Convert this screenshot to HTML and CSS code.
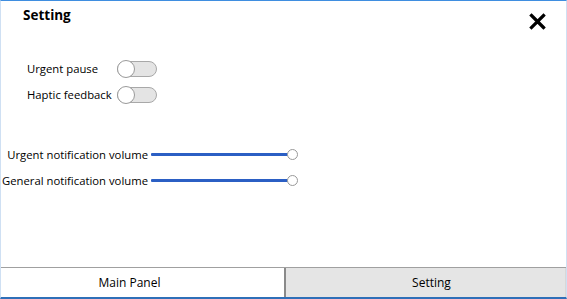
FILE: index.html
```html
<!DOCTYPE html>
<html>
<head>
<meta charset="utf-8">
<link rel="stylesheet" href="styles.css">
</head>
<body>
<div class="window">
  <div class="header">
    <div class="title">Setting</div>
    <div class="close">
      <svg width="17" height="17" viewBox="0 0 17 17"><path d="M2.5 2.5 L14.5 14.5 M14.5 2.5 L2.5 14.5" stroke="#000" stroke-width="3.2" stroke-linecap="square"/></svg>
    </div>
  </div>
  <div class="toggles">
    <div class="trow"><span class="tlabel">Urgent pause</span><span class="toggle"><span class="knob"></span></span></div>
    <div class="trow"><span class="tlabel">Haptic feedback</span><span class="toggle"><span class="knob"></span></span></div>
  </div>
  <div class="sliders">
    <div class="srow"><span class="slabel">Urgent notification volume</span><span class="slider"><span class="track"></span><span class="thumb"></span></span></div>
    <div class="srow"><span class="slabel">General notification volume</span><span class="slider"><span class="track"></span><span class="thumb"></span></span></div>
  </div>
  <div class="spacer"></div>
  <div class="tabs">
    <div class="tab main">Main Panel</div>
    <div class="sep"></div>
    <div class="tab active">Setting</div>
  </div>
</div>
</body>
</html>
```

FILE: styles.css
```css
html, body { margin: 0; padding: 0; }
body {
  width: 567px; height: 299px; overflow: hidden;
  font-family: "Open Sans", "Noto Sans", sans-serif;
  font-size: 11.3px; color: #000; background: #fff;
}
.window {
  box-sizing: border-box;
  width: 567px; height: 299px;
  border-top: 1px solid #3f8ee0;
  border-left: 1px solid #cfe0f3;
  border-right: 1px solid #cfe0f3;
  border-bottom: 2px solid #2f6fb8;
  display: flex; flex-direction: column;
}
.header {
  display: flex; justify-content: space-between; align-items: flex-start;
  padding: 5px 20px 0 22px;
  height: 33px; box-sizing: border-box;
}
.title { font-weight: 700; font-size: 13.5px; line-height: 19px; }
.close { padding-top: 7px; line-height: 0; }
.toggles { margin-top: 26px; padding-left: 26px; display: flex; flex-direction: column; gap: 8px; }
.trow { display: flex; align-items: center; height: 18px; }
.tlabel { width: 90px; line-height: 18px; }
.toggle {
  position: relative; width: 40px; height: 16px; box-sizing: border-box;
  border: 1px solid #a8a8a8; border-radius: 9px; background: #e4e4e4;
}
.knob {
  position: absolute; left: -1px; top: -2px;
  width: 18px; height: 18px; box-sizing: border-box;
  border: 1px solid #9a9a9a; border-radius: 50%; background: #fff;
}
.sliders { margin-top: 41px; display: flex; flex-direction: column; gap: 8px; }
.srow { display: flex; align-items: center; height: 18px; }
.slabel { width: 150px; text-align: right; padding-right: 3px; box-sizing: border-box; }
.slider { display: flex; align-items: center; }
.track { width: 137px; height: 3px; background: #2b5fc4; border-radius: 1px; }
.thumb {
  width: 11px; height: 11px; box-sizing: border-box; margin-left: -1px;
  border: 1px solid #999; border-radius: 50%; background: #fff;
}
.spacer { flex: 1; }
.tabs {
  display: flex; height: 30px; border-top: 1px solid #a0a0a0; box-sizing: border-box;
}
.tab { display: flex; align-items: center; justify-content: center; font-size: 12px; }
.main { width: 283px; background: #fff; padding-right: 26px; box-sizing: border-box; }
.sep { width: 2px; background: #8a8a8a; }
.active { flex: 1; background: #e5e5e5; padding-left: 12px; box-sizing: border-box; border-right: 1px solid #d8d8d8; }
```
